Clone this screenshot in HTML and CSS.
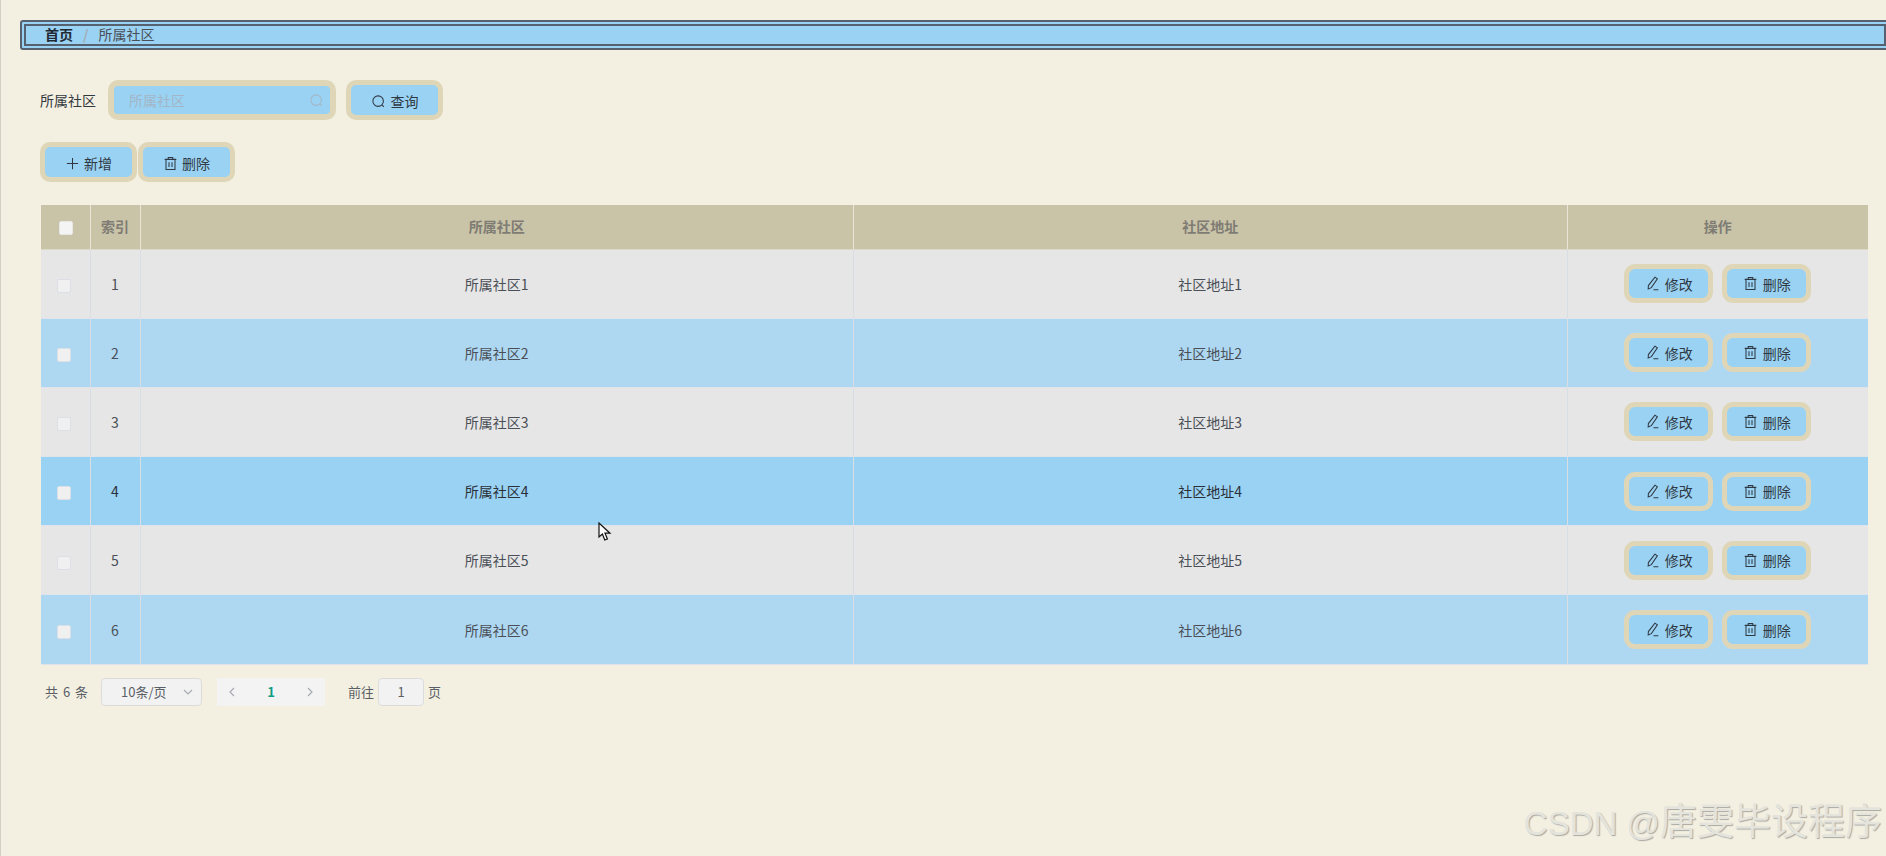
FILE: index.html
```html
<!DOCTYPE html>
<html lang="zh-CN">
<head>
  <meta charset="UTF-8" />
  <title>所属社区</title>
  <link rel="stylesheet" href="styles.css">
</head>
<body>
  <!-- icons -->
  <svg class="sprite" width="0" height="0">
    <symbol id="i-search" viewBox="0 0 16 16"><circle cx="7.6" cy="7.6" r="5.6"/><path d="M11.7 11.7l2 2"/></symbol>
    <symbol id="i-plus" viewBox="0 0 16 16"><path d="M8 2v12M2 8h12"/></symbol>
    <symbol id="i-delete" viewBox="0 0 16 16"><path d="M1.8 3.6h12.4M5.6 3.6V1.5h4.8v2.1M3.2 3.6v10.9h9.6V3.6M6.4 6.6v5M9.6 6.6v5"/></symbol>
    <symbol id="i-edit" viewBox="0 0 16 16"><path d="M10.6 1.2l2.6 1.8-6.4 9.4-3.4 1.4.2-3.6zM9 14.6h5.2"/></symbol>
  </svg>

  <div class="breadcrumb">
    <span class="crumb-first">首页</span>
    <span class="crumb-sep">/</span>
    <span>所属社区</span>
  </div>

  <div class="content">
    <div class="search-row">
      <label class="search-label">所属社区</label>
      <div class="search-input">
        <span class="placeholder">所属社区</span>
        <svg class="icon"><use href="#i-search"/></svg>
      </div>
      <button class="btn"><svg class="icon"><use href="#i-search"/></svg>查询</button>
    </div>

    <div class="toolbar">
      <button class="btn"><svg class="icon"><use href="#i-plus"/></svg>新增</button>
      <button class="btn"><svg class="icon"><use href="#i-delete"/></svg>删除</button>
    </div>

    <table class="data-table">
      <thead>
        <tr>
          <th class="col-check"><span class="checkbox head-check"></span></th>
          <th class="col-index">索引</th>
          <th>所属社区</th>
          <th>社区地址</th>
          <th class="col-action">操作</th>
        </tr>
      </thead>
      <tbody>
        <tr>
          <td><span class="checkbox"></span></td><td>1</td><td>所属社区1</td><td>社区地址1</td>
          <td><button class="btn"><svg class="icon"><use href="#i-edit"/></svg>修改</button><button class="btn"><svg class="icon"><use href="#i-delete"/></svg>删除</button></td>
        </tr>
        <tr>
          <td><span class="checkbox"></span></td><td>2</td><td>所属社区2</td><td>社区地址2</td>
          <td><button class="btn"><svg class="icon"><use href="#i-edit"/></svg>修改</button><button class="btn"><svg class="icon"><use href="#i-delete"/></svg>删除</button></td>
        </tr>
        <tr>
          <td><span class="checkbox"></span></td><td>3</td><td>所属社区3</td><td>社区地址3</td>
          <td><button class="btn"><svg class="icon"><use href="#i-edit"/></svg>修改</button><button class="btn"><svg class="icon"><use href="#i-delete"/></svg>删除</button></td>
        </tr>
        <tr class="hover-row">
          <td><span class="checkbox"></span></td><td>4</td><td>所属社区4</td><td>社区地址4</td>
          <td><button class="btn"><svg class="icon"><use href="#i-edit"/></svg>修改</button><button class="btn"><svg class="icon"><use href="#i-delete"/></svg>删除</button></td>
        </tr>
        <tr>
          <td><span class="checkbox"></span></td><td>5</td><td>所属社区5</td><td>社区地址5</td>
          <td><button class="btn"><svg class="icon"><use href="#i-edit"/></svg>修改</button><button class="btn"><svg class="icon"><use href="#i-delete"/></svg>删除</button></td>
        </tr>
        <tr>
          <td><span class="checkbox"></span></td><td>6</td><td>所属社区6</td><td>社区地址6</td>
          <td><button class="btn"><svg class="icon"><use href="#i-edit"/></svg>修改</button><button class="btn"><svg class="icon"><use href="#i-delete"/></svg>删除</button></td>
        </tr>
      </tbody>
    </table>

    <div class="pagination">
      <span class="total">共 6 条</span>
      <div class="page-size">
        <span>10条/页</span>
        <svg class="chevron" viewBox="0 0 12 12"><path d="M2 4l4 4 4-4"/></svg>
      </div>
      <div class="pager">
        <svg class="chevron" viewBox="0 0 12 12"><path d="M8 2L4 6l4 4"/></svg>
        <span class="page-current">1</span>
        <svg class="chevron" viewBox="0 0 12 12"><path d="M4 2l4 4-4 4"/></svg>
      </div>
      <span class="jump-label">前往</span>
      <div class="page-input">1</div>
      <span class="jump-unit">页</span>
    </div>
  </div>

  <!-- screenshot cursor -->
  <svg class="cursor" width="14" height="20" viewBox="0 0 14 20"><path d="M1 1v14l3.4-3 2.4 6 2.6-1-2.4-5.8H12z" fill="#fff" stroke="#111" stroke-width="1.2"/></svg>

  <div class="watermark"><span class="mark-latin">CSDN @</span>唐雯毕设程序</div>
</body>
</html>
```

FILE: styles.css
```css
html, body {
  height: 100%;
}

body {
  margin: 0;
  padding-top: 20px;
  box-sizing: border-box;
  background-color: #f3f0e2;
  border-left: 1px solid #d2cfc4;
  font-family: "Noto Sans CJK SC", "Noto Sans", sans-serif;
  font-size: 14px;
  color: #4a4f57;
  overflow: hidden;
  position: relative;
}

.sprite {
  position: absolute;
}

.icon {
  width: 15px;
  height: 15px;
  fill: none;
  stroke: currentColor;
  stroke-width: 1.1;
  flex: none;
}

.breadcrumb {
  width: 1870px;
  height: 30px;
  margin-left: 19px;
  box-sizing: border-box;
  padding: 0 0 2px 19px;
  display: flex;
  align-items: center;
  background-color: #9ad2f3;
  border: 6px double #55616e;
  border-radius: 3px;
  line-height: 1;
}

.crumb-first {
  font-weight: 700;
  color: #1f2933;
}

.crumb-sep {
  margin: 0 10px;
  color: #a3adb8;
  font-weight: 700;
}

.content {
  padding: 30px 16px 0 40px;
}

.search-row {
  display: flex;
  align-items: center;
  height: 40px;
  margin-left: -1px;
}

.search-label {
  width: 68px;
  color: #33383e;
}

.search-input {
  width: 228px;
  height: 40px;
  box-sizing: border-box;
  padding: 0 6px 0 15px;
  display: flex;
  align-items: center;
  justify-content: space-between;
  background-color: #9ad2f3;
  border: 6px solid #dfd6b8;
  border-radius: 10px;
  color: #a3b6c6;
}

.btn {
  height: 40px;
  width: 97px;
  padding: 0;
  box-sizing: border-box;
  display: inline-flex;
  align-items: center;
  justify-content: center;
  gap: 5px;
  background-color: #9ad2f3;
  border: 5px solid #dfd6b8;
  border-radius: 10px;
  font: inherit;
  color: #2f3944;
  vertical-align: middle;
}

.search-row .btn {
  margin-left: 10px;
  padding-top: 2px;
}

.toolbar {
  display: flex;
  margin: 22px 0 0 -1px;
}

.toolbar .btn {
  margin-right: 1px;
  padding-top: 2px;
  gap: 4px;
}

.data-table {
  width: 1827px;
  margin-top: 23px;
  border-collapse: collapse;
  table-layout: fixed;
  text-align: center;
}

.data-table th,
.data-table td {
  box-sizing: border-box;
}

.data-table th {
  height: 44px;
  padding: 0 0 2px;
  background-color: #c9c3a8;
  color: #7f7c74;
  font-weight: 700;
  border-right: 1px solid #e9e6d8;
  border-bottom: 1px solid #dcdac8;
}

.data-table td {
  height: 69.2px;
  padding: 0;
  border-right: 1px solid #d9dde4;
  border-bottom: 1px solid #dfe3ea;
  line-height: 20px;
}

.data-table th:last-child,
.data-table td:last-child {
  border-right: 0;
}

.col-check { width: 49px; }
.col-index { width: 50px; }
.col-action { width: 301px; }

.data-table tbody tr:nth-child(odd) { background-color: #e6e6e6; }
.data-table tbody tr:nth-child(even) { background-color: #aed8f2; }
.data-table tbody tr.hover-row { background-color: #9ad2f3; color: #2a3038; }

.data-table td .btn {
  width: 89px;
  height: 39px;
  margin-right: 9px;
  border-radius: 11px;
}

.data-table td .btn:last-child {
  margin-right: 0;
}

.checkbox {
  display: inline-block;
  width: 14px;
  height: 14px;
  box-sizing: border-box;
  margin-right: 3px;
  background-color: #f0f0f0;
  border: 1px solid #dcdfe6;
  border-radius: 2px;
  vertical-align: middle;
}

.head-check {
  margin-right: -2px;
  background-color: #f4f4f4;
  border-color: #e6e6e6;
}

.pagination {
  display: flex;
  align-items: center;
  height: 28px;
  margin: 13px 0 0 -1px;
  font-size: 13px;
  color: #5a5f66;
}

.total {
  margin-left: 5px;
  width: 56px;
  word-spacing: 2px;
  white-space: pre;
}

.chevron {
  width: 12px;
  height: 12px;
  fill: none;
  stroke: #a8abb2;
  stroke-width: 1.2;
}

.page-size {
  width: 101px;
  height: 28px;
  box-sizing: border-box;
  padding: 0 7px 0 19px;
  display: flex;
  align-items: center;
  justify-content: space-between;
  background-color: #f2f2f2;
  border: 1px solid #dcdcdc;
  border-radius: 4px;
}

.pager {
  width: 108px;
  height: 28px;
  margin-left: 15px;
  box-sizing: border-box;
  padding: 0 9px;
  display: flex;
  align-items: center;
  justify-content: space-between;
  background-color: #f3f3f3;
}

.page-current {
  color: #0f9d83;
  font-weight: 700;
}

.jump-label {
  margin-left: 23px;
}

.page-input {
  width: 46px;
  height: 28px;
  margin-left: 4px;
  box-sizing: border-box;
  display: flex;
  align-items: center;
  justify-content: center;
  background-color: #f2f2f2;
  border: 1px solid #dcdcdc;
  border-radius: 4px;
}

.jump-unit {
  margin-left: 4px;
}

.cursor {
  position: absolute;
  left: 597px;
  top: 522px;
}

.watermark {
  position: absolute;
  right: 4px;
  bottom: 10px;
  font-size: 37px;
  line-height: 44px;
  color: #e4e3dc;
  text-shadow: 1px 1px 1px #a9a8a2;
  white-space: nowrap;
}

.mark-latin {
  font-family: "Liberation Sans", sans-serif;
  font-size: 33px;
}
```
